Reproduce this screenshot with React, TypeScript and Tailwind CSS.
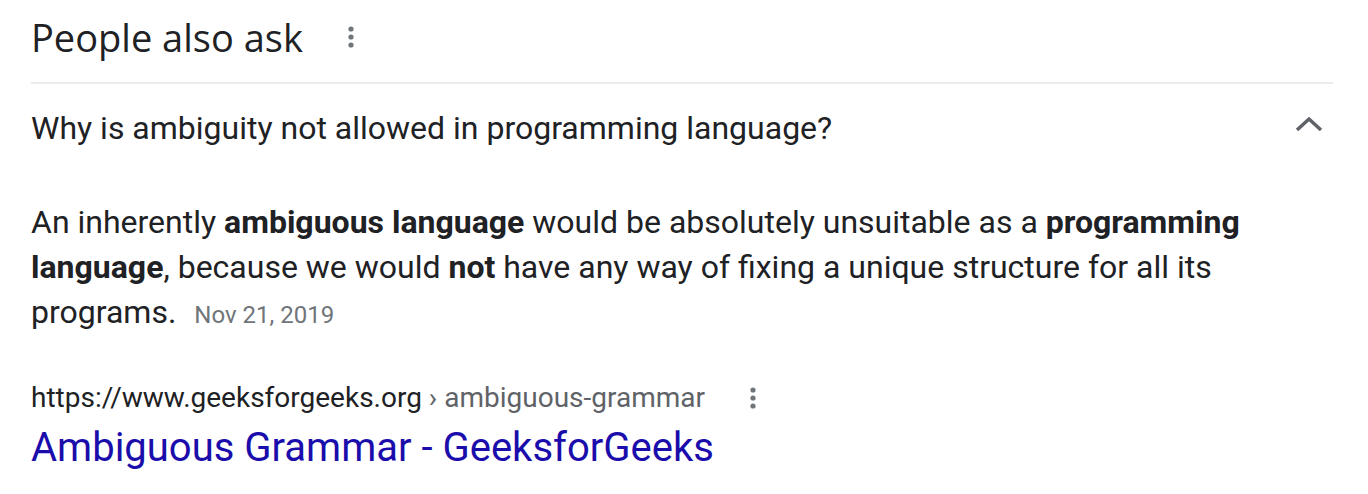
import React from "react";

function Dots({ className }: { className?: string }) {
  return (
    <svg width="6" height="22" viewBox="0 0 6 22" className={className}>
      <circle cx="3" cy="3" r="2.6" fill="#70757a" />
      <circle cx="3" cy="11" r="2.6" fill="#70757a" />
      <circle cx="3" cy="19" r="2.6" fill="#70757a" />
    </svg>
  );
}

export default function App() {
  return (
    <div className="w-[1368px] h-[494px] bg-white overflow-hidden" style={{ fontFamily: "Roboto, Arial, sans-serif" }}>
      <div className="ml-[31px] w-[1302px]">
        <div className="h-[84px] flex items-center border-b-2 border-[#ebebeb] pb-[8px]">
          <span className="text-[38px] text-[#202124] leading-none" style={{ fontFamily: "'Open Sans', Roboto, sans-serif" }}>People also ask</span>
          <Dots className="ml-[45px]" />
        </div>
        <div className="h-[88px] flex items-center justify-between">
          <span className="text-[32px] text-[#202124]">Why is ambiguity not allowed in programming language?</span>
          <svg width="28" height="18" viewBox="0 0 28 18" className="mr-[10px] mb-[8px]">
            <path d="M2 15 L14 4 L26 15" stroke="#5f6368" strokeWidth="3.5" fill="none" />
          </svg>
        </div>
        <div className="pt-[28px] text-[32px] leading-[45px] text-[#202124] w-[1240px]">
          An inherently <b className="font-bold">ambiguous language</b> would be absolutely unsuitable as a <b className="font-bold">programming language</b>, because we would <b className="font-bold">not</b> have any way of fixing a unique structure for all its programs.
          <span className="text-[24px] text-[#70757a] ml-[18px]">Nov 21, 2019</span>
        </div>
        <div className="mt-[40px] flex items-center h-[40px]">
          <span className="text-[28px] text-[#202124]">https://www.geeksforgeeks.org</span>
          <span className="text-[28px] text-[#5f6368]">&nbsp;› ambiguous-grammar</span>
          <Dots className="ml-[45px]" />
        </div>
        <div className="mt-[3px] text-[40px] leading-[54px] text-[#1a0dab]">Ambiguous Grammar - GeeksforGeeks</div>
      </div>
    </div>
  );
}
